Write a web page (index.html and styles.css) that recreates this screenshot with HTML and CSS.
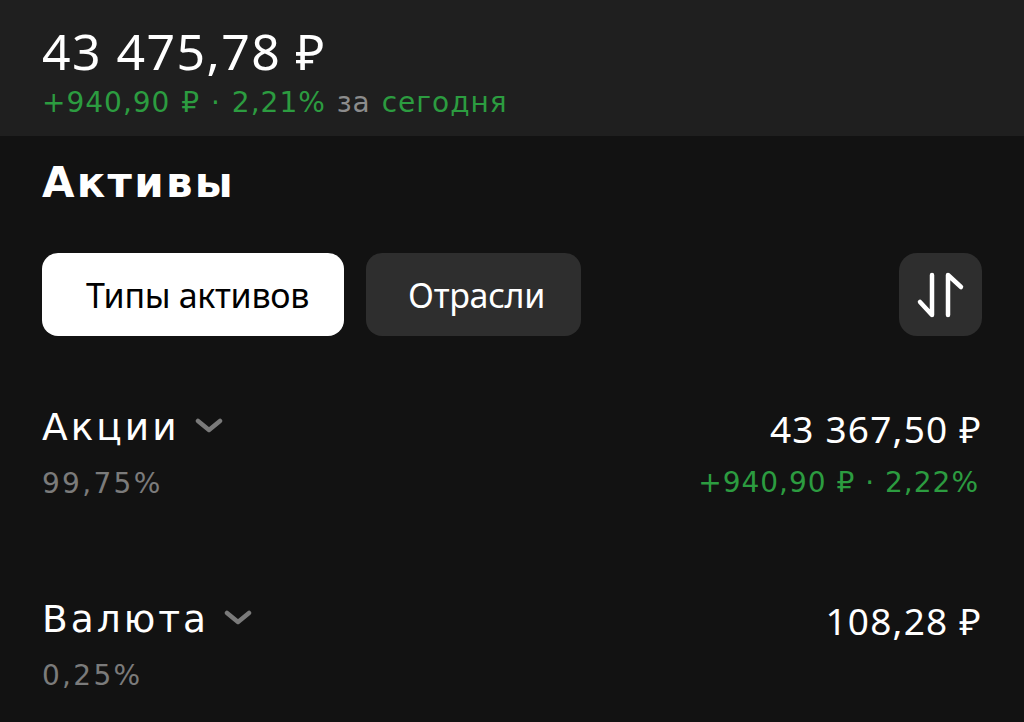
FILE: index.html
```html
<!DOCTYPE html>
<html lang="ru">
<head>
  <meta charset="UTF-8">
  <title>Портфель</title>
  <link rel="stylesheet" href="styles.css">
</head>
<body>

  <div class="summary">
    <div class="total">43 475,78 ₽</div>
    <div class="change"><span class="green">+940,90 ₽ · 2,21%</span> <span class="muted">за</span> <span class="green">сегодня</span></div>
  </div>

  <div class="content">
    <h1 class="title">Активы</h1>

    <div class="tabs">
      <button class="tab active">Типы активов</button>
      <button class="tab">Отрасли</button>
      <button class="sort" aria-label="Сортировка">
        <svg width="83" height="83" viewBox="0 0 83 83" fill="none" stroke="#fff" stroke-width="4.5" stroke-linecap="round" stroke-linejoin="round">
          <path d="M33 22 V 62 L 21 49"/>
          <path d="M49 62 V 22 L 62 34"/>
        </svg>
      </button>
    </div>

    <div class="asset">
      <div class="asset-left">
        <div class="asset-name">Акции <svg class="chevron" width="28" height="16" viewBox="0 0 28 16"><polyline points="3,3 14,12 25,3"/></svg></div>
        <div class="asset-share">99,75%</div>
      </div>
      <div class="asset-right">
        <div class="asset-sum">43 367,50 ₽</div>
        <div class="asset-change green">+940,90 ₽ · 2,22%</div>
      </div>
    </div>

    <div class="asset">
      <div class="asset-left">
        <div class="asset-name">Валюта <svg class="chevron" width="28" height="16" viewBox="0 0 28 16"><polyline points="3,3 14,12 25,3"/></svg></div>
        <div class="asset-share">0,25%</div>
      </div>
      <div class="asset-right">
        <div class="asset-sum">108,28 ₽</div>
      </div>
    </div>
  </div>

</body>
</html>
```

FILE: styles.css
```css
body {
  margin: 0;
  background: #121212;
  color: #fff;
  font-family: 'Noto Sans', 'Open Sans', sans-serif;
  overflow: hidden;
}

.green {
  color: #2c9c40;
}

.muted {
  color: #8c8c8c;
}

/* шапка с общей суммой */
.summary {
  background: #1f1f1f;
  height: 136px;
  box-sizing: border-box;
  padding: 19px 42px 0;
}

.total {
  font-size: 50px;
  line-height: 64px;
  letter-spacing: 1.4px;
}

.change {
  font-family: 'DejaVu Sans', sans-serif;
  font-size: 28px;
  line-height: 40px;
  letter-spacing: 1px;
  word-spacing: 1px;
}

.content {
  padding: 0 42px;
}

.title {
  margin: 22px 0 0;
  font-family: 'DejaVu Sans', sans-serif;
  font-size: 42px;
  line-height: 50px;
  font-weight: 700;
  letter-spacing: 2.3px;
}

.tabs {
  display: flex;
  gap: 22px;
  margin-top: 45px;
}

.tab {
  height: 83px;
  padding: 0 36px 0 42px;
  border: none;
  border-radius: 16px;
  background: #2e2e2e;
  color: #fff;
  font-family: inherit;
  font-size: 34px;
  letter-spacing: -0.3px;
}

.tab.active {
  background: #fff;
  color: #000;
  padding: 0 35px 0 44px;
}

.sort {
  margin-left: auto;
  width: 83px;
  height: 83px;
  border: none;
  border-radius: 18px;
  background: #2e2e2e;
  padding: 0;
}

.sort svg {
  display: block;
}

/* строки активов */
.asset {
  display: flex;
  justify-content: space-between;
  margin-top: 67px;
}

.asset + .asset {
  margin-top: 91px;
}

.asset-name {
  font-family: 'DejaVu Sans', sans-serif;
  font-size: 37.5px;
  line-height: 48px;
  letter-spacing: 3px;
  display: flex;
  align-items: center;
}

.chevron {
  margin: 0 0 2px 15px;
  fill: none;
  stroke: #7a7a7a;
  stroke-width: 4.5;
  stroke-linecap: round;
  stroke-linejoin: round;
}

.asset-share {
  margin-top: 13px;
  font-family: 'DejaVu Sans', sans-serif;
  font-size: 28px;
  line-height: 40px;
  letter-spacing: 2.3px;
  color: #7b7b7b;
}

.asset-right {
  text-align: right;
}

.asset-sum {
  font-size: 37px;
  line-height: 52px;
  letter-spacing: 1.2px;
}

.asset-change {
  margin-top: 8px;
  padding-right: 3px;
  font-family: 'DejaVu Sans', sans-serif;
  font-size: 28px;
  line-height: 40px;
  letter-spacing: 1px;
}
```
